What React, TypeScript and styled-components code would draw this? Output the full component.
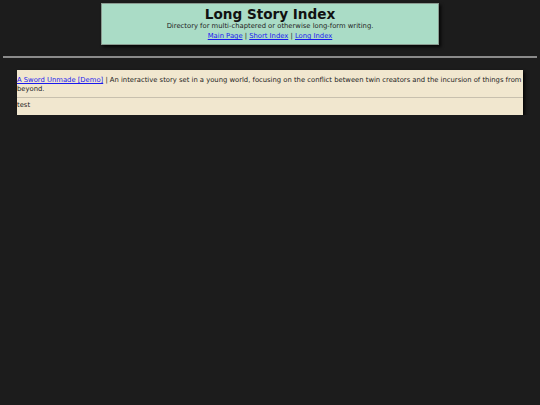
import React from "react";
import styled, { createGlobalStyle } from "styled-components";

const Global = createGlobalStyle`
  html, body { margin: 0; padding: 0; background: #1c1c1c; }
  body { font-family: "DejaVu Sans", Verdana, sans-serif; font-size: 6.8px; color: #222; }
`;

const Page = styled.div`
  padding-top: 3px;
`;

const Header = styled.header`
  box-sizing: border-box;
  width: 338px;
  margin: 0 auto;
  background: #aadcc6;
  border: 1px solid #8a9a90;
  box-shadow: 2px 2px 3px rgba(0, 0, 0, 0.8);
  text-align: center;
  padding: 2px 0 3px;
`;

const Title = styled.h1`
  margin: 0;
  font-size: 13.6px;
  line-height: 16px;
  font-weight: bold;
  color: #111;
`;

const Sub = styled.p`
  margin: 0;
  line-height: 9px;
`;

const Nav = styled.nav`
  line-height: 10px;
`;

const Link = styled.a`
  color: #1a1aee;
  text-decoration: underline;
`;

const Rule = styled.hr`
  margin: 11px 3px 0;
  border: none;
  height: 2px;
  background: #8a8a8a;
`;

const List = styled.section`
  margin: 12px 17px 0;
  background: #f1e7cf;
  box-shadow: 2px 2px 3px rgba(0, 0, 0, 0.8);
  padding-top: 4px;
`;

const Row = styled.div<{ $last?: boolean }>`
  padding: ${(p) => (p.$last ? "3px 0 5px" : "2px 0 3px")};
  line-height: 9px;
  border-bottom: ${(p) => (p.$last ? "none" : "1px solid #c8c0ae")};
`;

export default function App() {
  return (
    <>
      <Global />
      <Page>
        <Header>
          <Title>Long Story Index</Title>
          <Sub>Directory for multi-chaptered or otherwise long-form writing.</Sub>
          <Nav>
            <Link href="#">Main Page</Link> | <Link href="#">Short Index</Link> |{" "}
            <Link href="#">Long Index</Link>
          </Nav>
        </Header>
        <Rule />
        <List>
          <Row>
            <Link href="#">A Sword Unmade [Demo]</Link> | An interactive story set in a young
            world, focusing on the conflict between twin creators and the incursion of things
            from beyond.
          </Row>
          <Row $last>test</Row>
        </List>
      </Page>
    </>
  );
}
